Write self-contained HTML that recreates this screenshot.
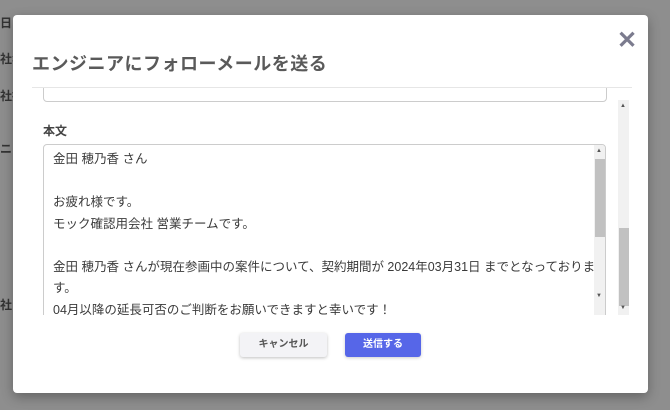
<!DOCTYPE html><html><head><meta charset="utf-8"><style>
body{margin:0;width:670px;height:410px;background:#8e8e8e;position:relative;overflow:hidden;font-family:"Liberation Sans","Noto Sans CJK JP",sans-serif;}
.bg{position:absolute;color:#333;font-size:12px;font-weight:bold}
.m{position:absolute;left:13px;top:15px;width:635px;height:378px;background:#fff;border-radius:4px;box-shadow:0 4px 12px rgba(0,0,0,.3)}
.t{position:absolute;left:19px;top:35px;font-size:18px;font-weight:bold;color:#5a5a5a;letter-spacing:.5px}
.x{position:absolute;left:604px;top:11px;font-size:24px;font-weight:bold;color:#7b7b8e}
.hr{position:absolute;left:19px;top:72px;width:600px;height:1px;background:#e6e6e6}
.sc{position:absolute;left:19px;top:73px;width:600px;height:227px;overflow:hidden}
.in1{position:absolute;left:11px;top:-10px;width:562px;height:22px;border:1px solid #ccc;border-radius:4px}
.lab{position:absolute;left:11px;top:34px;font-size:12px;font-weight:bold;color:#444}
.ta{position:absolute;left:11px;top:56px;width:561px;height:180px;border:1px solid #ccc;border-radius:4px;overflow:hidden}
.tx{position:absolute;left:9px;top:4px;width:556px;font-size:12.5px;line-height:21.5px;color:#3a3a3a}
.sb1{position:absolute;right:0;top:0;width:11px;height:180px;background:#f1f1f1}
.th1{position:absolute;left:1px;top:14px;width:10px;height:78px;background:#c1c1c1}
.sb2{position:absolute;left:586px;top:12px;width:11px;height:215px;background:#f1f1f1}
.th2{position:absolute;left:1px;top:128px;width:10px;height:78px;background:#c1c1c1}
.ar{position:absolute;font-size:6px;color:#555}
.b{position:absolute;top:318px;height:24px;border-radius:3px;font-size:10px;font-weight:bold;text-align:center;line-height:24px}
</style></head><body>
<div class="bg" style="left:0;top:14px">日</div>
<div class="bg" style="left:0;top:50px">社名</div>
<div class="bg" style="left:0;top:87px">社担</div>
<div class="bg" style="left:0;top:140px">ニ</div>
<div class="bg" style="left:0;top:296px">社</div>
<div class="m">
<div class="t">エンジニアにフォローメールを送る</div>
<div class="x">✕</div>
<div class="hr"></div>
<div class="sc">
<div class="in1"></div>
<div class="lab">本文</div>
<div class="ta"><div class="tx">金田 穂乃香 さん<br><br>お疲れ様です。<br>モック確認用会社 営業チームです。<br><br>金田 穂乃香 さんが現在参画中の案件について、契約期間が 2024年03月31日 までとなっておりま<br>す。<br>04月以降の延長可否のご判断をお願いできますと幸いです！</div>
<div class="sb1"><div class="th1"></div><div class="ar" style="left:2px;top:3px">▲</div><div class="ar" style="left:2px;top:148px">▼</div></div></div>
<div class="sb2"><div class="th2"></div><div class="ar" style="left:2px;top:3px">▲</div><div class="ar" style="left:2px;top:205px">▼</div></div>
</div>
<div class="b" style="left:227px;width:87px;background:#f3f3f6;color:#555;box-shadow:0 1px 3px rgba(0,0,0,.25)">キャンセル</div>
<div class="b" style="left:332px;width:76px;background:#5666e8;color:#fff;box-shadow:0 1px 3px rgba(0,0,0,.2)">送信する</div>
</div>
</body></html>
